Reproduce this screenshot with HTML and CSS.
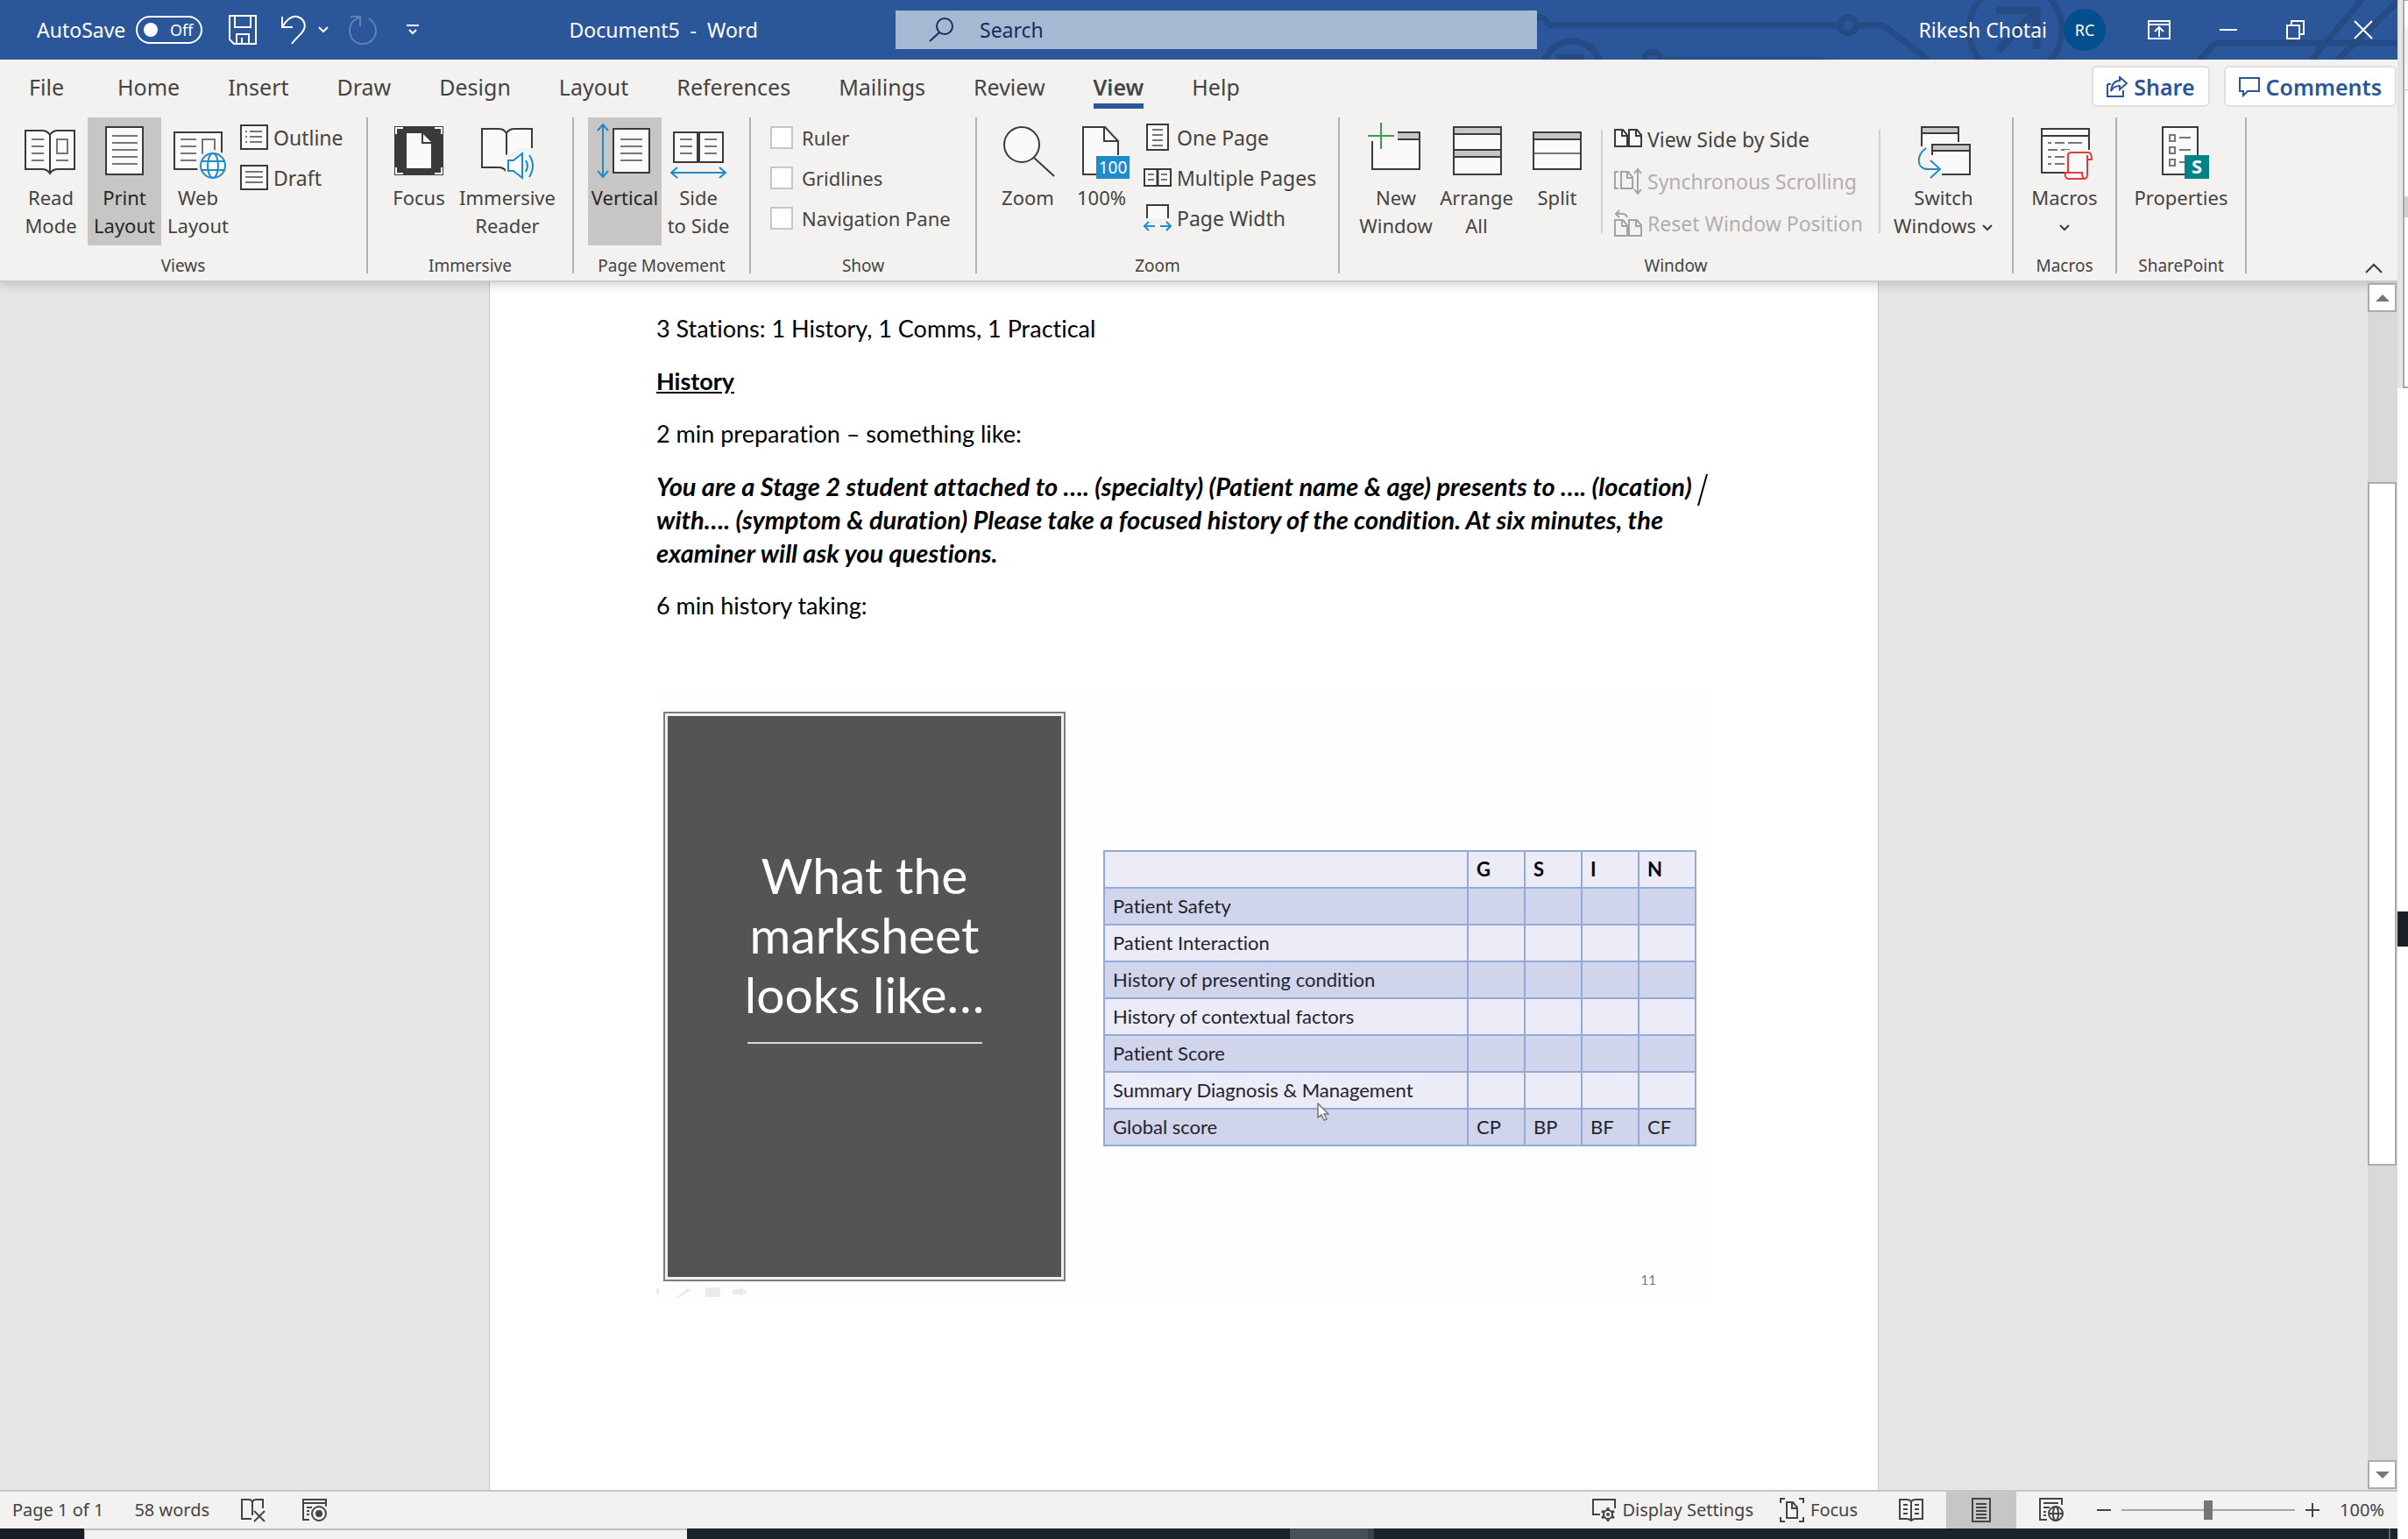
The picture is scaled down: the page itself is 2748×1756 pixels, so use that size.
FILE: index.html
```html
<!DOCTYPE html>
<html lang="en">
<head>
<meta charset="utf-8">
<title>Document5 - Word</title>
<link rel="stylesheet" href="styles.css">
</head>
<body>
<div class="desktop">
<div class="window">

<header class="titlebar">
  <svg class="circuit" width="990" height="68" viewBox="1746 0 990 68" aria-hidden="true">
    <g fill="none" stroke="#264b84" stroke-width="7">
      <path d="M1766 29H2098M2120 29H2144Q2150 29 2156 34L2200 68M1766 29a9 9 0 1 0-12 8"/>
      <circle cx="1794" cy="80" r="33"/><circle cx="2109" cy="29" r="9"/><circle cx="1886" cy="68" r="9"/>
      <path d="M1898 69H2078L2090 74M1812 50Q1824 60 1824 74"/>
      <circle cx="2300" cy="34" r="53"/>
      <path d="M2280 58L2322 14M2278 12H2324V56" stroke-width="9"/>
      <path d="M2510 70L2524 53Q2527 49 2532 49H2736M2638 68L2698 -4M2668 68L2738 0"/>
    </g>
    <path d="M1776 62h32v6h-32z" fill="#264b84"/>
  </svg>
  <div class="title-left">
    <label class="autosave" for="autosave">AutoSave</label>
    <button class="toggle" id="autosave" type="button" aria-pressed="false"><span class="knob"></span>Off</button>
    <button class="qa" type="button" aria-label="Save"><svg width="32" height="34" viewBox="0 0 32 34"><path d="M1 1H31V33H6L1 28ZM7 1V14H25V1M9 33V22H23V33M15 33V26"/></svg></button>
    <button class="qa qa-undo" type="button" aria-label="Undo"><svg width="30" height="34" viewBox="0 0 30 34"><path d="M2 2V14H14M2 14C8 4 14 1 19 2C27 4 30 12 26 18C24 22 18 26 13 33"/></svg></button>
    <button class="qa qa-more" type="button" aria-label="Undo list"><svg width="14" height="10" viewBox="0 0 14 10"><path d="M2 2L7 7L12 2"/></svg></button>
    <button class="qa qa-redo" type="button" aria-label="Repeat" disabled><svg width="32" height="34" viewBox="0 0 32 34"><path d="M2 2H13V13M13 3C4 5 1 12 1 19C2 28 8 33 16 33C25 33 31 26 31 18C31 11 27 7 23 4"/></svg></button>
    <button class="qa qa-custom" type="button" aria-label="Customise Quick Access Toolbar"><svg width="16" height="14" viewBox="0 0 16 14"><path d="M1 2H15M4 7L8 11L12 7"/></svg></button>
    <h1 class="doc-title">Document5&nbsp; -&nbsp; Word</h1>
  </div>
  <div class="search">
    <label for="search" aria-label="Search"><svg width="30" height="30" viewBox="0 0 30 30"><circle cx="18" cy="11" r="9"/><path d="M12 18L1 28"/></svg></label>
    <input id="search" type="text" placeholder="Search">
  </div>
  <div class="title-right">
    <span class="user">Rikesh Chotai</span>
    <button class="avatar" type="button">RC</button>
    <div class="win-buttons">
      <button type="button" aria-label="Ribbon Display Options"><svg width="26" height="22" viewBox="0 0 26 22"><path d="M1 1H25V21H1ZM1 5H25M13 19V9M8 13L13 8L18 13"/></svg></button>
      <button type="button" aria-label="Minimise"><svg width="22" height="22" viewBox="0 0 22 22"><path d="M1 11H21"/></svg></button>
      <button type="button" aria-label="Restore"><svg width="22" height="22" viewBox="0 0 22 22"><path d="M1 6H15V21H1ZM6 6V1H20V16H15"/></svg></button>
      <button type="button" aria-label="Close"><svg width="22" height="22" viewBox="0 0 22 22"><path d="M1 1L21 21M21 1L1 21"/></svg></button>
    </div>
  </div>
</header>

<nav class="tabs">
  <button type="button" class="file">File</button><button type="button">Home</button><button type="button">Insert</button><button type="button">Draw</button><button type="button">Design</button><button type="button">Layout</button><button type="button">References</button><button type="button">Mailings</button><button type="button">Review</button><button type="button" class="current">View</button><button type="button">Help</button>
  <div class="tab-actions">
    <button class="action" type="button"><svg width="24" height="24" viewBox="0 0 24 24"><path d="M1 9V23H19V16M1 9H5M15 1L23 8L15 15V11C10 11 7 13 5 17C6 9 10 5 15 5Z"/></svg>Share</button>
    <button class="action" type="button"><svg width="24" height="24" viewBox="0 0 24 24"><path d="M1 2H23V17H10L5 22V17H1Z"/></svg>Comments</button>
  </div>
</nav>

<section class="ribbon">
  <div class="group g-views">
    <div class="tools">
      <button class="big" type="button"><svg width="64" height="72" viewBox="0 0 64 72"><path class="pg" d="M31 17Q28 12 22 12H3V56H22Q28 56 31 61Q34 56 40 56H59V12H40Q34 12 31 17V61"/><path class="ln" d="M10 22H24M10 30H24M10 38H24M10 46H24M39 22H51V38H39ZM38 46H52"/></svg><span>Read<br>Mode</span></button>
      <button class="big on" type="button"><svg width="64" height="72" viewBox="0 0 64 72"><path class="pg" d="M11 8H53V62H11Z"/><path class="ln" d="M18 18H47M18 26H47M18 34H47M18 42H47M18 50H47"/></svg><span>Print<br>Layout</span></button>
      <button class="big" type="button"><svg width="64" height="72" viewBox="0 0 64 72"><path class="pg" d="M5 14H59V56H5Z"/><path class="ln" d="M12 22H30M12 30H30M12 38H30M12 46H30M37 46V22H51V40"/><circle cx="49" cy="52" r="18" fill="#f3f2f1"/><g class="bl"><circle cx="49" cy="52" r="14" fill="#fafafa"/><ellipse cx="49" cy="52" rx="6" ry="14"/><path d="M36 47H62M36 57H62"/></g></svg><span>Web<br>Layout</span></button>
      <div class="stack">
        <button class="small" type="button"><svg width="32" height="32" viewBox="0 0 32 32"><path class="pg" d="M1 2H31V29H1Z"/><path class="ln" d="M11 9H25M11 15H25M11 21H25M6 9H8M6 15H8M6 21H8"/></svg>Outline</button>
        <button class="small" type="button"><svg width="32" height="32" viewBox="0 0 32 32"><path class="pg" d="M1 2H31V29H1Z"/><path class="ln" d="M6 9H26M6 15H26M6 21H26"/></svg>Draft</button>
      </div>
    </div>
    <h2>Views</h2>
  </div>

  <div class="group g-immersive">
    <div class="tools">
      <button class="big" type="button"><svg width="64" height="72" viewBox="0 0 64 72"><path d="M4 7H60V63H4Z" fill="#3b3a39"/><path d="M6 16V9H14M50 9H58V16M58 54V61H50M14 61H6V54" fill="none" stroke="#fff" stroke-width="2"/><path d="M18 15H36L46 25V55H18Z" fill="#fafafa"/><path class="pn" d="M36 15V26H46"/></svg><span>Focus</span></button>
      <button class="big wide" type="button"><svg width="64" height="72" viewBox="0 0 64 72"><path class="pg" d="M31 15Q28 10 22 10H3V54H22Q28 54 31 59Q34 54 40 54H60V10H40Q34 10 31 15V56"/><path d="M30 40L46 32H64V72H30Z" fill="#f3f2f1"/><g class="bl"><path d="M33 46V58H39L49 66V38L39 46Z" fill="#fafafa"/><path d="M53 46Q57 52 53 59M57 40Q65 52 57 65"/></g></svg><span>Immersive<br>Reader</span></button>
    </div>
    <h2>Immersive</h2>
  </div>

  <div class="group g-movement">
    <div class="tools">
      <button class="big on" type="button"><svg width="64" height="72" viewBox="0 0 64 72"><path class="bl" d="M7 5V65M1 12L7 5L13 12M1 58L7 65L13 58"/><path class="pg" d="M19 10H60V60H19Z"/><path class="ln" d="M27 22H52M27 30H52M27 38H52M27 46H52"/></svg><span>Vertical</span></button>
      <button class="big" type="button"><svg width="64" height="72" viewBox="0 0 64 72"><path class="pg" d="M4 14H60V48H4Z"/><path d="M32 14V48" stroke="#3b3a39" stroke-width="4"/><path class="ln" d="M11 22H25M11 30H25M11 38H25M39 22H53M39 30H53M39 38H53"/><path class="bl" d="M1 60H63M8 54L1 60L8 66M56 54L63 60L56 66"/></svg><span>Side<br>to Side</span></button>
    </div>
    <h2>Page Movement</h2>
  </div>

  <div class="group g-show">
    <div class="tools"><div class="stack">
      <label class="check"><input type="checkbox">Ruler</label>
      <label class="check"><input type="checkbox">Gridlines</label>
      <label class="check"><input type="checkbox">Navigation Pane</label>
    </div></div>
    <h2>Show</h2>
  </div>

  <div class="group g-zoom">
    <div class="tools">
      <button class="big" type="button"><svg width="64" height="72" viewBox="0 0 64 72"><circle class="pg" cx="25" cy="28" r="20"/><path class="pn" d="M39 43L62 64"/></svg><span>Zoom</span></button>
      <button class="big" type="button"><svg width="64" height="72" viewBox="0 0 64 72"><path class="pg" d="M51 40V24L36 8H11V62H26"/><path class="pn" d="M35 8V24H51"/><path d="M26 41H64V67H26Z" fill="#1e8bcd"/><text x="45" y="61" class="hundred">100</text></svg><span>100%</span></button>
      <div class="stack">
        <button class="small" type="button"><svg width="32" height="32" viewBox="0 0 32 32"><path class="pg" d="M4 1H28V30H4Z"/><path class="ln" d="M10 7H22M10 13H22M10 19H22M10 25H22"/></svg>One Page</button>
        <button class="small" type="button"><svg width="32" height="32" viewBox="0 0 32 32"><path class="pg" d="M1 6H31V25H1Z"/><path d="M16 6V25" stroke="#3b3a39" stroke-width="3"/><path class="ln" d="M5 12H12M5 18H12M20 12H27M20 18H27"/></svg>Multiple Pages</button>
        <button class="small" type="button"><svg width="32" height="32" viewBox="0 0 32 32"><path class="pg" d="M4 16V1H28V16"/><path class="bl" d="M1 25H13M19 25H31M6 20L1 25L6 30M26 20L31 25L26 30"/></svg>Page Width</button>
      </div>
    </div>
    <h2>Zoom</h2>
  </div>

  <div class="group g-window">
    <div class="tools">
      <button class="big" type="button"><svg width="64" height="72" viewBox="0 0 64 72"><path d="M5 22V56H59V14H34V22Z" fill="#fafafa"/><path d="M34 14H59V22H34Z" fill="#c8c6c4"/><path class="pn" d="M5 24V56H59V14H34M34 22H59"/><path d="M0 18H30M15 3V33" stroke="#3a9d4c" stroke-width="2"/></svg><span>New<br>Window</span></button>
      <button class="big" type="button"><svg width="64" height="72" viewBox="0 0 64 72"><path class="pg" d="M6 8H60V62H6Z"/><path d="M6 8H60V16H6ZM6 34H60V42H6Z" fill="#c8c6c4" stroke="#3b3a39" stroke-width="2"/></svg><span>Arrange<br>All</span></button>
      <button class="big" type="button"><svg width="64" height="72" viewBox="0 0 64 72"><path class="pg" d="M5 14H59V56H5Z"/><path d="M5 14H59V22H5Z" fill="#c8c6c4" stroke="#3b3a39" stroke-width="2"/><path class="ln" d="M6 38H58"/></svg><span>Split</span></button>
      <div class="stack compare">
        <button class="small" type="button"><svg width="32" height="32" viewBox="0 0 32 32"><path class="pg" d="M1 5H10L15 11V24H1ZM17 5H26L31 11V24H17Z"/><path class="pn" d="M9 5V12H15M25 5V12H31"/></svg>View Side by Side</button>
        <button class="small" type="button" disabled><svg width="32" height="32" viewBox="0 0 32 32"><path class="pn" d="M5 5H1V24H5M8 5H16L21 11V24H8ZM15 5V12H21M27 2V30M23 7L27 2L31 7M23 25L27 30L31 25"/></svg>Synchronous Scrolling</button>
        <button class="small" type="button" disabled><svg width="32" height="32" viewBox="0 0 32 32"><path class="pn" d="M1 12H10L15 18V30H1ZM17 12H26L31 18V30H17ZM9 12V19H15M25 12V19H31M15 9Q14 4 3 5M6 1L2 5L6 9"/></svg>Reset Window Position</button>
      </div>
      <button class="big wide" type="button"><svg width="64" height="72" viewBox="0 0 64 72"><path class="pg" d="M7 30V8H49V26"/><path d="M7 8H49V15H7Z" fill="#c8c6c4" stroke="#3b3a39" stroke-width="2"/><path d="M16 25H62V62H28L16 50Z" fill="#fafafa"/><path d="M19 28H62V35H19Z" fill="#c8c6c4" stroke="#3b3a39" stroke-width="2"/><path class="pn" d="M19 40V28H62V62H30"/><path class="bl" d="M12 32C1 40 0 56 15 56H27M17 46L28 56L17 66"/></svg><span>Switch<br>Windows <svg class="chev" width="14" height="10" viewBox="0 0 14 10"><path class="pn" d="M2 2L7 7L12 2"/></svg></span></button>
    </div>
    <h2>Window</h2>
  </div>

  <div class="group g-macros">
    <div class="tools">
      <button class="big" type="button"><svg width="64" height="72" viewBox="0 0 64 72"><path class="pg" d="M6 10H60V60H6Z"/><path class="pn" d="M6 18H60"/><path class="ln" d="M13 26H17M21 26H32M36 26H52M13 34H24M28 34H38M13 42H17M21 42H32M13 50H17M21 50H32"/><path d="M32 34H64V68H32Z" fill="#f3f2f1"/><path d="M36 60V40Q36 37 40 37H59Q63 37 63 45H58V62Q58 67 54 67H36Q32 66 33 60H52Q52 66 55 67M58 45V40" fill="#fafafa" stroke="#e03c3c" stroke-width="2"/></svg><span>Macros<br><svg class="chev" width="14" height="10" viewBox="0 0 14 10"><path class="pn" d="M2 2L7 7L12 2"/></svg></span></button>
    </div>
    <h2>Macros</h2>
  </div>

  <div class="group g-sharepoint">
    <div class="tools">
      <button class="big wide" type="button"><svg width="64" height="72" viewBox="0 0 64 72"><path class="pg" d="M11 8H51V62H11Z"/><path class="ln" d="M19 17H25V24H19ZM19 31H25V38H19ZM19 45H25V52H19ZM30 20H43M30 34H43M30 48H36"/><path d="M36 40H64V67H36Z" fill="#038387"/><text x="50" y="61" class="ess">S</text></svg><span>Properties</span></button>
    </div>
    <h2>SharePoint</h2>
  </div>
  <button class="collapse" type="button" aria-label="Collapse the Ribbon"><svg width="20" height="12" viewBox="0 0 20 12"><path class="pn" d="M1 11L10 2L19 11"/></svg></button>
</section>

<main class="workspace">
  <div class="canvas">
    <article class="page">
      <p>3 Stations: 1 History, 1 Comms, 1 Practical</p>
      <p class="heading">History</p>
      <p>2 min preparation – something like:</p>
      <p class="prompt">You are a Stage 2 student attached to …. (specialty) (Patient name &amp; age) presents to …. (location) <svg class="caret" width="12" height="38" viewBox="0 0 12 38"><path d="M11 1L1 37"/></svg><br>with…. (symptom &amp; duration) Please take a focused history of the condition. At six minutes, the<br>examiner will ask you questions.</p>
      <p>6 min history taking:</p>
      <figure class="slide">
        <div class="panel"><h3>What the<br>marksheet<br>looks like…</h3></div>
        <div class="marks">
          <table>
            <colgroup><col><col class="c-g"><col class="c-g"><col class="c-g"><col class="c-g"></colgroup>
            <thead><tr><th></th><th>G</th><th>S</th><th>I</th><th>N</th></tr></thead>
            <tbody>
              <tr><td>Patient Safety</td><td></td><td></td><td></td><td></td></tr>
              <tr><td>Patient Interaction</td><td></td><td></td><td></td><td></td></tr>
              <tr><td>History of presenting condition</td><td></td><td></td><td></td><td></td></tr>
              <tr><td>History of contextual factors</td><td></td><td></td><td></td><td></td></tr>
              <tr><td>Patient Score</td><td></td><td></td><td></td><td></td></tr>
              <tr><td>Summary Diagnosis &amp; Management</td><td></td><td></td><td></td><td></td></tr>
              <tr><td>Global score</td><td>CP</td><td>BP</td><td>BF</td><td>CF</td></tr>
            </tbody>
          </table>
          <svg class="pointer" width="14" height="22" viewBox="0 0 14 22"><path d="M1 1V17L5 14L8 20L11 19L8 13H13Z" fill="#fff" stroke="#777" stroke-width="1.5"/></svg>
          <span class="slide-no">11</span>
        </div>
        <svg class="slide-tools" width="110" height="14" viewBox="0 0 110 14" aria-hidden="true"><path d="M0 1H3V8H0ZM56 0H73V11H56ZM87 2H96V0L104 5L96 10V8H87ZM22 12L36 1L39 3L26 12Z" fill="#ebebeb"/></svg>
      </figure>
    </article>
  </div>
  <div class="scrollbar">
    <button type="button" aria-label="Scroll up"><svg width="16" height="8" viewBox="0 0 16 8"><path d="M0 8L8 0L16 8Z" fill="#767676"/></svg></button>
    <div class="track"><div class="thumb"></div></div>
    <button type="button" aria-label="Scroll down"><svg width="16" height="8" viewBox="0 0 16 8"><path d="M0 0L8 8L16 0Z" fill="#767676"/></svg></button>
  </div>
</main>

<footer class="status">
  <button type="button" class="st-page">Page 1 of 1</button>
  <button type="button" class="st-words">58 words</button>
  <button type="button" class="st-proof" aria-label="Proofing errors"><svg width="30" height="28" viewBox="0 0 30 28"><path d="M13 24H2V2H10Q13 2 14 5V20M14 5Q15 2 18 2H26V12M16 15L28 27M28 15L16 27"/></svg></button>
  <button type="button" aria-label="Macro recording"><svg width="30" height="28" viewBox="0 0 30 28"><path d="M9 25H2V2H28V10M2 6H28M6 11H12M6 15H9M6 19H9"/><circle cx="20" cy="18" r="8"/><circle cx="20" cy="18" r="3" fill="#444"/></svg></button>
  <div class="st-right">
    <button type="button" class="st-display"><svg width="28" height="28" viewBox="0 0 28 28"><path d="M10 19H2V2H27V12"/><circle cx="19" cy="19" r="5"/><path d="M19 11V14M19 24V27M12 15L15 17M23 21L26 23M12 23L15 21M23 17L26 15" stroke-width="3"/><circle cx="19" cy="19" r="1"/></svg>Display Settings</button>
    <button type="button" class="st-focus"><svg width="28" height="28" viewBox="0 0 28 28"><path d="M1 6V1H6M22 1H27V6M27 22V27H22M6 27H1V22M8 5H15L20 11V23H8ZM14 5V12H20"/></svg>Focus</button>
    <button type="button" class="view" aria-label="Read Mode"><svg width="28" height="28" viewBox="0 0 28 28"><path d="M14 4Q12 2 9 2H1V24H9Q12 24 14 26Q16 24 19 24H27V2H19Q16 2 14 4V26M5 8H10M5 13H10M5 18H10M18 8H23M18 13H23M18 18H23"/></svg></button>
    <button type="button" class="view on" aria-label="Print Layout"><svg width="28" height="28" viewBox="0 0 28 28"><path d="M4 1H24V27H4ZM8 7H20M8 11H20M8 15H20M8 19H20M8 23H20"/></svg></button>
    <button type="button" class="view" aria-label="Web Layout"><svg width="28" height="28" viewBox="0 0 28 28"><path d="M9 25H1V1H26V8M5 6H22M5 11H12M5 16H8M5 20H8"/><circle cx="19" cy="18" r="8"/><ellipse cx="19" cy="18" rx="3" ry="8"/><path d="M11 18H27"/></svg></button>
    <button type="button" class="zoom-step" aria-label="Zoom out"><svg width="16" height="16" viewBox="0 0 16 16"><path d="M0 8H16"/></svg></button>
    <input class="zoom" type="range" min="0" max="200" value="100" aria-label="Zoom">
    <button type="button" class="zoom-step" aria-label="Zoom in"><svg width="16" height="16" viewBox="0 0 16 16"><path d="M0 8H16M8 0V16"/></svg></button>
    <button type="button" class="zoom-value">100%</button>
  </div>
</footer>
<div class="taskbar"><span class="tb-start"></span><span class="tb-search"></span><span class="tb-gap"></span><span class="tb-app"></span><span class="tb-rest"></span></div>
</div>

<aside class="behind"><div class="behind-window"><span class="b1"></span><span class="b2"></span><span class="b3"></span><span class="b4"></span><span class="b5"></span><span class="b6"></span></div><span class="behind-dark"></span></aside>
</div>
</body>
</html>
```
FILE: styles.css
```css
* { box-sizing: border-box; }
body { margin: 0; background: #fff; color: #444; font: 22px/32px "Noto Sans", "Open Sans", sans-serif; }
button { border: 0; padding: 0; margin: 0; background: none; color: inherit; font: inherit; white-space: nowrap; }
h1, h2, h3, p, figure { margin: 0; font-weight: 400; }
svg { display: block; flex: none; }

.desktop { display: flex; min-height: 100vh; }
.window { flex: 1; min-width: 0; display: flex; flex-direction: column; }

/* title bar */
.titlebar { position: relative; display: grid; grid-template-columns: 1022fr 732fr 982fr; align-items: center; height: 68px; background: #2b579a; color: #fff; font-size: 23px; overflow: hidden; }
.circuit { position: absolute; right: 0; top: 0; }
.title-left, .title-right { position: relative; display: flex; align-items: center; }
.title-left { padding-left: 42px; }
.autosave { width: 113px; white-space: nowrap; }
.toggle { display: flex; align-items: center; gap: 14px; width: 76px; height: 32px; padding-left: 7px; border: 2px solid #fff; border-radius: 16px; font-size: 18px; line-height: 24px; }
.knob { width: 16px; height: 16px; border-radius: 50%; background: #fff; }
.qa { margin-left: 30px; }
.qa svg, .win-buttons svg { fill: none; stroke: #fff; stroke-width: 2; }
.qa-undo { margin-left: 27px; }
.qa-more { margin-left: 12px; }
.qa-redo { margin-left: 22px; opacity: .25; }
.qa-custom { margin-left: 33px; }
.doc-title { margin-left: auto; padding-right: 157px; font-size: 23px; white-space: nowrap; }
.search { position: relative; display: flex; align-items: center; height: 44px; padding-left: 38px; background: #a6b9d3; }
.search svg { fill: none; stroke: #10305f; stroke-width: 2; }
.search input { flex: 1; margin-left: 28px; padding: 0; border: 0; outline: 0; background: none; color: #10305f; font: inherit; }
.search input::placeholder { color: #10305f; opacity: 1; }
.title-right { justify-content: flex-end; padding-right: 28px; }
.avatar { width: 48px; height: 48px; margin: 0 48px 0 19px; border-radius: 50%; background: #034f8d; font-size: 18px; }
.win-buttons { display: flex; gap: 55px; }

/* tabs */
.tabs { display: flex; height: 66px; padding-left: 33px; gap: 55px; background: #f3f2f1; font-size: 25px; }
.tabs > button { height: 56px; padding-top: 12px; border-bottom: 6px solid transparent; line-height: 30px; }
.tabs > .file { margin-right: 6px; }
.tabs > .current { border-color: #2b579a; font-weight: 600; }
.tab-actions { display: flex; gap: 16px; margin: 7px 1px 0 auto; }
.action { display: flex; align-items: center; gap: 7px; height: 47px; padding: 0 15px; border: 2px solid #e1dfdd; border-radius: 6px; background: #fff; color: #2b579a; font-weight: 600; }
.action svg { fill: none; stroke: #2b579a; stroke-width: 2; }

/* ribbon */
.ribbon { position: relative; z-index: 1; display: flex; height: 188px; background: #f3f2f1; border-bottom: 2px solid #cdcdcd; box-shadow: 0 2px 12px rgba(0,0,0,.2); clip-path: inset(0 0 -16px 0); }
.group { flex: none; height: 178px; border-right: 2px solid #b3b0ad; }
.group h2 { margin-top: 14px; font-size: 19px; line-height: 18px; text-align: center; }
.tools { display: flex; height: 146px; }
.g-views { width: 420px; padding-left: 16px; }
.g-views h2 { margin-left: -16px; }
.g-immersive { width: 235px; }
.g-immersive .tools, .g-movement .tools, .g-zoom .tools { padding-left: 16px; }
.g-movement { width: 202px; }
.g-show { width: 258px; }
.g-show .tools { padding-left: 22px; }
.g-zoom { width: 414px; }
.g-window { width: 769px; }
.g-window .tools { padding-left: 22px; gap: 8px; }
.g-window .wide { width: 128px; }
.g-macros { width: 118px; }
.g-sharepoint { width: 148px; }
.g-macros .tools, .g-sharepoint .tools { justify-content: center; }
.big { flex: none; display: flex; flex-direction: column; align-items: center; justify-content: flex-start; width: 84px; height: 146px; padding-top: 3px; text-align: center; line-height: 32px; }
.wide { width: 118px; }
.on { background: #c8c6c4; color: #262626; }
.chev { display: inline-block; vertical-align: middle; }
.stack { display: flex; flex-direction: column; padding-left: 6px; }
.g-show .stack { padding-left: 0; }
.small { flex: none; display: flex; align-items: center; gap: 6px; height: 46px; font-size: 23px; text-align: left; }
.compare { margin: 14px 0; height: 118px; padding: 0 18px 0 13px; border: 2px solid #d2d0ce; border-width: 0 2px; justify-content: center; }
.compare .small { height: 48px; }
.small:disabled { color: #b1afad; }
.small:disabled .pn { stroke: #a5a3a1; }
.check { display: flex; align-items: center; gap: 10px; height: 46px; white-space: nowrap; }
.check input { appearance: none; width: 26px; height: 26px; margin: 0; border: 2px solid #c8c6c4; background: #fff; }
.pg { fill: #fafafa; stroke: #3b3a39; stroke-width: 2; }
.pn { fill: none; stroke: #3b3a39; stroke-width: 2; }
.ln { fill: none; stroke: #797775; stroke-width: 2; }
.bl { fill: none; stroke: #1e8bcd; stroke-width: 2; }
.hundred { font-size: 19px; fill: #fff; text-anchor: middle; }
.ess { font-size: 22px; font-weight: 700; fill: #fff; text-anchor: middle; }
.collapse { margin: auto 17px 8px auto; }

/* document */
.workspace { flex: 1; display: flex; background: #e6e6e6; }
.canvas { flex: 1; min-width: 0; display: flex; justify-content: center; }
.page { width: 1586px; padding: 34px 0 0 190px; border: 1px solid #c6c6c6; border-width: 0 1px; background: #fff; color: #000; font: 27px/38px Lato, "Open Sans", sans-serif; font-variant-ligatures: none; white-space: nowrap; }
.page p { margin-bottom: 22px; }
.heading { font-weight: 700; text-decoration: underline; }
.page .prompt { font-size: 29px; font-weight: 700; font-style: italic; }
.caret { display: inline-block; height: 38px; margin: -8px 0; vertical-align: middle; fill: none; stroke: #000; stroke-width: 2; }
.slide { position: relative; display: flex; align-items: flex-start; width: 1202px; height: 693px; margin-top: 80px; padding: 22px 8px 0; background: #fefefe; }
.panel { width: 459px; height: 650px; padding-top: 150px; border: 2px solid #7d7d7d; outline: 3px solid #f0f0f0; outline-offset: -5px; background: #555355; color: #fff; }
.panel h3 { width: 268px; margin: 0 auto; padding-bottom: 21px; border-bottom: 2px solid #d8d8d8; font-size: 57px; line-height: 68px; text-align: center; display: flex; justify-content: center; }
.marks { position: relative; flex: 1; height: 668px; padding: 158px 0 0 43px; }
.marks table { width: 677px; table-layout: fixed; border-collapse: collapse; font-size: 22px; line-height: 24px; color: #22232e; }
.c-g { width: 65px; }
.marks th, .marks td { height: 42px; padding: 0 9px; border: 2px solid #93a9d8; text-align: left; }
.marks th { color: #000; }
.marks tr { background: #ecebf8; }
.marks tbody tr:nth-child(odd) { background: #d1d5eb; }
.pointer { position: absolute; left: 287px; top: 446px; }
.slide-no { position: absolute; right: 53px; bottom: 12px; font-size: 15px; line-height: 16px; color: #777; }
.slide-tools { position: absolute; left: 0; bottom: 0; }

/* scrollbar */
.scrollbar { display: flex; flex-direction: column; width: 34px; padding: 1px 1px 1px 0; background: #d9d9d9; }
.scrollbar button { display: flex; align-items: center; justify-content: center; height: 33px; border: 2px solid #acacac; background: #fff; position: relative; z-index: 2; }
.track { flex: 1; display: flex; flex-direction: column; padding: 194px 0 336px; }
.thumb { flex: 1; border: 2px solid #acacac; background: #fff; }

/* status bar */
.status { display: flex; align-items: center; height: 44px; padding-left: 14px; border-top: 2px solid #c8c6c4; background: #f3f2f1; font-size: 20px; }
.status svg { fill: none; stroke: #444; stroke-width: 2; }
.st-words { margin-left: 35px; }
.st-proof { margin: 0 40px 0 35px; }
.st-right { display: flex; align-items: center; align-self: stretch; margin-left: auto; padding-right: 15px; }
.st-display, .st-focus { display: flex; align-items: center; gap: 7px; }
.st-focus { margin: 0 21px 0 30px; }
.view { display: flex; align-items: center; justify-content: center; width: 80px; height: 42px; }
.zoom-step { margin: 0 12px; }
.zoom { appearance: none; width: 198px; height: 22px; margin: 0; background: linear-gradient(#a6a6a6, #a6a6a6) center / 100% 2px no-repeat; }
.zoom::-webkit-slider-thumb { appearance: none; width: 10px; height: 22px; border: 0; border-radius: 0; background: #767676; }
.zoom-value { margin-left: 11px; }

/* taskbar and the window that shows behind */
.taskbar { display: flex; height: 12px; background: #1a222c; }
.tb-start { width: 96px; background: #1a1d26; }
.tb-search { width: 688px; background: #f1f1f1; border-top: 2px solid #c0c0c0; border-left: 1px solid #c0c0c0; }
.tb-gap { width: 688px; }
.tb-app { width: 96px; background: #474f59; border-right: 7px solid #39424c; }
.tb-rest { flex: 1; margin-right: 8px; border-right: 2px solid #5b626b; }
.behind { display: flex; flex-direction: column; align-items: stretch; width: 12px; background: #fff; }
.behind-window { display: flex; flex-direction: column; height: 443px; margin-bottom: 597px; padding-left: 6px; background: linear-gradient(90deg, #e2e2e2, #ececec); }
.behind-window span { border-left: 2px solid #a8a8a8; background: #fff; }
.b1 { height: 31px; border-top: 1px solid #a8a8a8; }
.behind-window .b2 { height: 42px; background: #f3f2f1; }
.behind-window .b3 { height: 30px; background: #f4f5f8; border-bottom: 1px solid #ccc; }
.b4 { height: 121px; }
.behind-window .b5 { height: 24px; background: #d0d0d0; }
.b6 { flex: 1; border-bottom: 2px solid #a8a8a8; }
.behind-dark { height: 40px; background: #1a1f2a; }
```
